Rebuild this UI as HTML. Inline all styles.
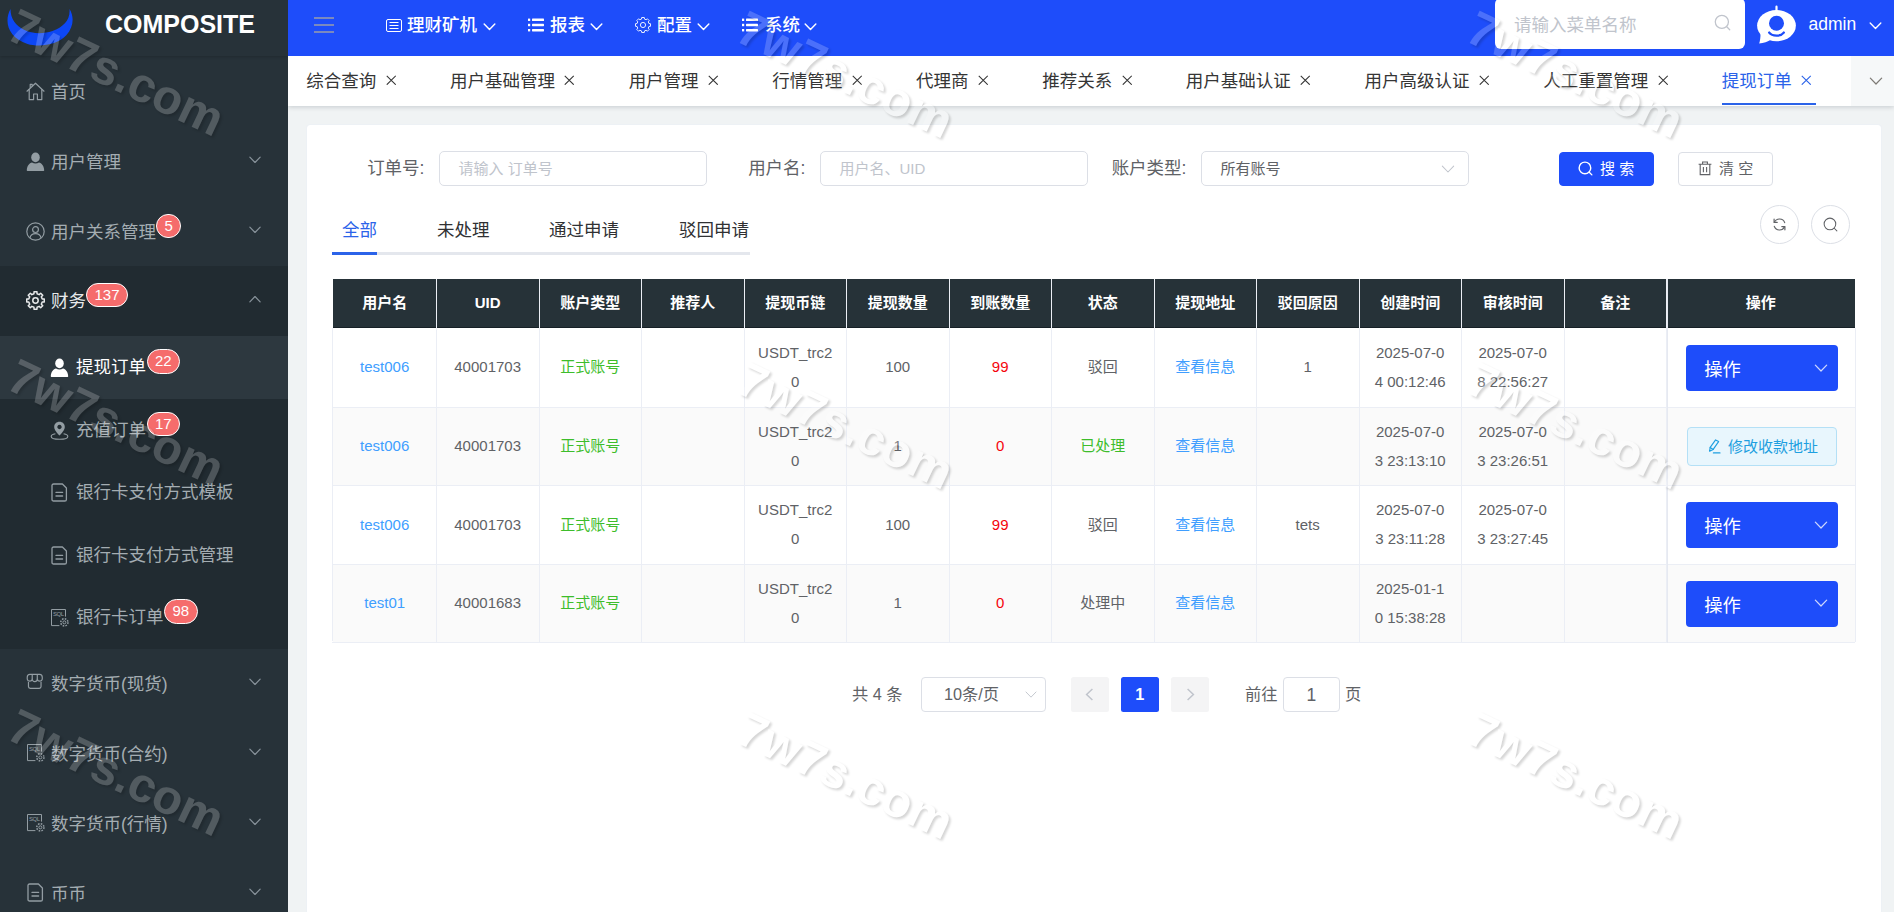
<!DOCTYPE html>
<html lang="zh-CN">
<head>
<meta charset="utf-8">
<title>提现订单</title>
<style>
*{box-sizing:border-box;margin:0;padding:0}
html,body{width:1894px;height:912px;overflow:hidden;background:#f0f3f4;font-family:"Liberation Sans","Noto Sans CJK SC",sans-serif;color:#606266;font-size:17.5px}
svg{display:block}
.abs{position:absolute}
/* ---------- sidebar ---------- */
#side{position:absolute;left:0;top:0;width:288px;height:912px;background:#273239;overflow:hidden;z-index:5}
#logo{position:absolute;left:0;top:0;width:288px;height:56px;background:#273239;box-shadow:0 1px 3px rgba(0,0,0,.18)}
#logo .name{position:absolute;left:105px;top:9px;font-size:25px;font-weight:700;color:#fff;line-height:30px}
.mi{position:absolute;left:0;width:288px;height:70px;color:#a4adb2;font-size:17.5px;line-height:70px}
.mi .ic{position:absolute;left:26px;top:24.6px;width:19px;height:19px}
.mi .tx{position:absolute;left:51px;top:0;white-space:nowrap}
.mi .ar{position:absolute;left:249px;top:29px;width:12px;height:8px}
.sub{position:absolute;left:0;width:288px;height:62.5px;color:#a4adb2;font-size:17.5px;line-height:62.5px}
.sub .ic{position:absolute;left:50px;top:22px;width:19px;height:19px}
.sub .tx{position:absolute;left:76px;top:0;white-space:nowrap}
.bdg{position:absolute;height:24.5px;min-width:24.5px;padding:0 7.5px;border-radius:12.5px;background:#f56c6c;border:1.25px solid #fff;color:#fff;font-size:15px;line-height:22px;text-align:center;z-index:2}
/* ---------- header ---------- */
#head{position:absolute;left:288px;top:0;width:1606px;height:56.4px;background:#1e4dfa;z-index:3}
.nav{position:absolute;top:0;height:56px;color:#fff;font-size:17.5px;font-weight:500;line-height:50px;white-space:nowrap}
/* ---------- tabs bar ---------- */
#tabs{position:absolute;left:288px;top:56px;width:1606px;height:50px;background:#fff;box-shadow:0 1px 5px rgba(0,21,41,.18);z-index:2}
.tb{position:absolute;top:0;height:50px;line-height:51px;font-size:17.5px;color:#353535;white-space:nowrap}
/* ---------- card ---------- */
#card{position:absolute;left:307px;top:125px;width:1574px;height:800px;background:#fff;box-shadow:0 0 0 1px rgba(235,238,245,.55);border-radius:3.5px;z-index:1}
.lab{text-align:right;line-height:35px;font-size:17.5px;color:#606266;white-space:nowrap}
.inp{width:268px;height:35px;border:1.25px solid #dcdfe6;border-radius:5px;background:#fff}
.inp span{position:absolute;left:18.5px;top:0;line-height:33px;font-size:15px;color:#c0c4cc;white-space:nowrap}
.btn{width:95px;height:34.5px;border:1.25px solid;border-radius:4px;font-size:15px;line-height:32px;white-space:nowrap}
.st{font-size:17.5px;line-height:50px;white-space:nowrap}
.rb{width:39px;height:39px;border-radius:50%;border:1.25px solid #dcdfe6;background:#fff}
.th{height:48.5px;line-height:48px;text-align:center;color:#fff;font-weight:700;font-size:15px;white-space:nowrap}
.td{display:flex;align-items:center;justify-content:center;text-align:center;font-size:15px;line-height:28.75px;color:#606266}
.opb{width:152px;height:46px;background:#1e4dfa;border-radius:4px;color:#fff;font-size:18.3px;line-height:50px;white-space:nowrap}
.edb{width:150px;height:39px;background:#e8f6fd;border:1.25px solid #b4e0f6;border-radius:4px;color:#1e9fe0;font-size:15px;line-height:37px;white-space:nowrap}
.pg{font-size:16.25px;line-height:35px;color:#606266;white-space:nowrap}
.pb{width:37.5px;height:35px;border-radius:2.5px;text-align:center;line-height:35px;font-size:16.25px}
#wm{position:absolute;left:0;top:0;width:1894px;height:912px;overflow:hidden;z-index:20;pointer-events:none}
#wmi{position:absolute;left:0;top:0;width:1894px;height:912px;overflow:hidden;filter:url(#wmf)}
.wm{position:absolute;font-size:48.5px;font-weight:700;line-height:48.5px;color:#fff;white-space:nowrap;transform-origin:0 0;transform:rotate(25.3deg)}

</style>
</head>
<body>
<div id="side">
<div class="abs" style="left:0;top:266px;width:288px;height:382.5px;background:#212b31"></div>
<div class="abs" style="left:0;top:336px;width:288px;height:62.5px;background:#2d383f"></div>
<div class="mi" style="top:57px;color:#a4adb2"><span class="ic"><svg width="19" height="19" viewBox="0 0 19 19"><g fill="none" stroke="#939da3" stroke-width="1.2" stroke-linejoin="round" stroke-linecap="round"><path d="M1 9.2 L9.5 1.2 L18 9.2"/><path d="M3.2 7.6 V17.6 H7.6 V12 H11.4 V17.6 H15.8 V7.6"/><path d="M4.2 5.6 V2.4 H6.2 V3.8"/></g></svg></span><span class="tx">首页</span></div>
<div class="mi" style="top:127px;color:#a4adb2"><span class="ic"><svg width="19" height="19" viewBox="0 0 19 19"><g fill="#939da3"><ellipse cx="9.5" cy="5.4" rx="4.3" ry="4.8"/><path d="M0.8 18.6 C0.8 13.6 3.6 11 6 10.4 C8 11.8 11 11.8 13 10.4 C15.4 11 18.2 13.6 18.2 18.6 C18.2 19 17.9 19 17.6 19 H1.4 C1.1 19 0.8 19 0.8 18.6Z"/></g></svg></span><span class="tx">用户管理</span><span class="ar"><svg width="12" height="8" viewBox="0 0 14 9"><path d="M1 1.2 L7 7.4 L13 1.2" fill="none" stroke="#87929a" stroke-width="1.4" stroke-linecap="round" stroke-linejoin="round"/></svg></span></div>
<div class="mi" style="top:197px;color:#a4adb2"><span class="ic"><svg width="19" height="19" viewBox="0 0 19 19"><g fill="none" stroke="#939da3" stroke-width="1.2"><circle cx="9.5" cy="9.5" r="8.7"/><circle cx="9.5" cy="7.6" r="2.9"/><path d="M4 15.8 C4.6 12.6 7 11.6 9.5 11.6 C12 11.6 14.4 12.6 15 15.8"/></g></svg></span><span class="tx">用户关系管理</span><span class="ar"><svg width="12" height="8" viewBox="0 0 14 9"><path d="M1 1.2 L7 7.4 L13 1.2" fill="none" stroke="#87929a" stroke-width="1.4" stroke-linecap="round" stroke-linejoin="round"/></svg></span></div>
<div class="bdg" style="left:156.0px;top:213.65px">5</div>
<div class="mi" style="top:266px;color:#e8eaeb"><span class="ic"><svg width="19" height="19" viewBox="0 0 19 19"><g fill="none" stroke="#e8eaeb" stroke-width="1.5" stroke-linejoin="round"><path d="M8.08 0.71 L10.92 0.71 L11.07 2.78 L13.14 3.64 L14.71 2.28 L16.72 4.29 L15.36 5.86 L16.22 7.93 L18.29 8.08 L18.29 10.92 L16.22 11.07 L15.36 13.14 L16.72 14.71 L14.71 16.72 L13.14 15.36 L11.07 16.22 L10.92 18.29 L8.08 18.29 L7.93 16.22 L5.86 15.36 L4.29 16.72 L2.28 14.71 L3.64 13.14 L2.78 11.07 L0.71 10.92 L0.71 8.08 L2.78 7.93 L3.64 5.86 L2.28 4.29 L4.29 2.28 L5.86 3.64 L7.93 2.78Z"/><circle cx="9.5" cy="9.5" r="2.7"/></g></svg></span><span class="tx">财务</span><span class="ar"><svg width="12" height="8" viewBox="0 0 14 9"><path d="M1 7.8 L7 1.6 L13 7.8" fill="none" stroke="#87929a" stroke-width="1.4" stroke-linecap="round" stroke-linejoin="round"/></svg></span></div>
<div class="bdg" style="left:86.0px;top:282.65px">137</div>
<div class="sub" style="top:336px;color:#ffffff"><span class="ic"><svg width="19" height="19" viewBox="0 0 19 19"><g fill="#ffffff"><ellipse cx="9.5" cy="5.4" rx="4.3" ry="4.8"/><path d="M0.8 18.6 C0.8 13.6 3.6 11 6 10.4 C8 11.8 11 11.8 13 10.4 C15.4 11 18.2 13.6 18.2 18.6 C18.2 19 17.9 19 17.6 19 H1.4 C1.1 19 0.8 19 0.8 18.6Z"/></g></svg></span><span class="tx">提现订单</span></div>
<div class="bdg" style="left:146.5px;top:349.2px">22</div>
<div class="sub" style="top:398.5px;color:#a4adb2"><span class="ic"><svg width="19" height="19" viewBox="0 0 19 19"><path d="M9.5 0.8 C6.4 0.8 4.2 3 4.2 5.9 C4.2 9 7.4 12.2 9.5 14.6 C11.6 12.2 14.8 9 14.8 5.9 C14.8 3 12.6 0.8 9.5 0.8Z M9.5 3.8 A2.2 2.2 0 1 1 9.49 3.8Z" fill="#939da3" fill-rule="evenodd"/><path d="M5.4 12.8 C2.8 13.3 1.2 14.3 1.2 15.4 C1.2 17 4.9 18.2 9.5 18.2 C14.1 18.2 17.8 17 17.8 15.4 C17.8 14.3 16.2 13.3 13.6 12.8" fill="none" stroke="#939da3" stroke-width="1.1"/></svg></span><span class="tx">充值订单</span></div>
<div class="bdg" style="left:146.5px;top:411.7px">17</div>
<div class="sub" style="top:461px;color:#a4adb2"><span class="ic"><svg width="19" height="19" viewBox="0 0 19 19"><g fill="none" stroke="#939da3" stroke-width="1.3" stroke-linejoin="round" stroke-linecap="round"><path d="M3.6 1 H12.4 L16.4 5 V16.4 C16.4 17.4 15.8 18 14.8 18 H3.6 C2.6 18 2 17.4 2 16.4 V2.6 C2 1.6 2.6 1 3.6 1Z"/><path d="M6 9.4 H12.6 M6 13 H12.6"/></g></svg></span><span class="tx">银行卡支付方式模板</span></div>
<div class="sub" style="top:523.5px;color:#a4adb2"><span class="ic"><svg width="19" height="19" viewBox="0 0 19 19"><g fill="none" stroke="#939da3" stroke-width="1.3" stroke-linejoin="round" stroke-linecap="round"><path d="M3.6 1 H12.4 L16.4 5 V16.4 C16.4 17.4 15.8 18 14.8 18 H3.6 C2.6 18 2 17.4 2 16.4 V2.6 C2 1.6 2.6 1 3.6 1Z"/><path d="M6 9.4 H12.6 M6 13 H12.6"/></g></svg></span><span class="tx">银行卡支付方式管理</span></div>
<div class="sub" style="top:586px;color:#a4adb2"><span class="ic"><svg width="19" height="19" viewBox="0 0 19 19"><g fill="none" stroke="#939da3" stroke-width="1" stroke-linejoin="round"><path d="M9.4 17.6 H1.5 V1.5 H15.5 V8.6"/></g><text x="3" y="8.2" font-family="Liberation Sans,sans-serif" font-size="6" fill="#939da3" textLength="11">SQL</text><g transform="translate(9.6 9.6) scale(0.5)"><g fill="none" stroke="#939da3" stroke-width="2"><circle cx="9.5" cy="9.5" r="3"/><circle cx="9.5" cy="9.5" r="7.2" stroke-dasharray="3.2 2.45" stroke-width="3"/></g></g></svg></span><span class="tx">银行卡订单</span></div>
<div class="bdg" style="left:164.0px;top:599.2px">98</div>
<div class="mi" style="top:648.5px"><span class="ic"><svg width="17.5" height="16.6" viewBox="0 0 20 19"><g fill="none" stroke="#939da3" stroke-width="1.35" stroke-linejoin="round"><path d="M4.4 1.6 H15.6 C17.4 1.6 18.6 3 18.6 5 V7 A2.9 2.9 0 0 1 12.9 7 A2.9 2.9 0 0 1 7.1 7 A2.9 2.9 0 0 1 1.4 7 V5 C1.4 3 2.6 1.6 4.4 1.6Z"/><path d="M7.1 1.6 V7 M12.9 1.6 V7"/><path d="M2.8 10.4 V15.6 C2.8 16.8 3.6 17.6 4.8 17.6 H15.2 C16.4 17.6 17.2 16.8 17.2 15.6 V10.4"/></g></svg></span><span class="tx">数字货币(现货)</span><span class="ar"><svg width="12" height="8" viewBox="0 0 14 9"><path d="M1 1.2 L7 7.4 L13 1.2" fill="none" stroke="#87929a" stroke-width="1.4" stroke-linecap="round" stroke-linejoin="round"/></svg></span></div>
<div class="mi" style="top:718.5px"><span class="ic"><svg width="19" height="19" viewBox="0 0 19 19"><g fill="none" stroke="#939da3" stroke-width="1" stroke-linejoin="round"><path d="M9.4 17.6 H1.5 V1.5 H15.5 V8.6"/></g><text x="3" y="8.2" font-family="Liberation Sans,sans-serif" font-size="6" fill="#939da3" textLength="11">SQL</text><g transform="translate(9.6 9.6) scale(0.5)"><g fill="none" stroke="#939da3" stroke-width="2"><circle cx="9.5" cy="9.5" r="3"/><circle cx="9.5" cy="9.5" r="7.2" stroke-dasharray="3.2 2.45" stroke-width="3"/></g></g></svg></span><span class="tx">数字货币(合约)</span><span class="ar"><svg width="12" height="8" viewBox="0 0 14 9"><path d="M1 1.2 L7 7.4 L13 1.2" fill="none" stroke="#87929a" stroke-width="1.4" stroke-linecap="round" stroke-linejoin="round"/></svg></span></div>
<div class="mi" style="top:788.5px"><span class="ic"><svg width="19" height="19" viewBox="0 0 19 19"><g fill="none" stroke="#939da3" stroke-width="1" stroke-linejoin="round"><path d="M9.4 17.6 H1.5 V1.5 H15.5 V8.6"/></g><text x="3" y="8.2" font-family="Liberation Sans,sans-serif" font-size="6" fill="#939da3" textLength="11">SQL</text><g transform="translate(9.6 9.6) scale(0.5)"><g fill="none" stroke="#939da3" stroke-width="2"><circle cx="9.5" cy="9.5" r="3"/><circle cx="9.5" cy="9.5" r="7.2" stroke-dasharray="3.2 2.45" stroke-width="3"/></g></g></svg></span><span class="tx">数字货币(行情)</span><span class="ar"><svg width="12" height="8" viewBox="0 0 14 9"><path d="M1 1.2 L7 7.4 L13 1.2" fill="none" stroke="#87929a" stroke-width="1.4" stroke-linecap="round" stroke-linejoin="round"/></svg></span></div>
<div class="mi" style="top:858.5px"><span class="ic"><svg width="19" height="19" viewBox="0 0 19 19"><g fill="none" stroke="#939da3" stroke-width="1.3" stroke-linejoin="round" stroke-linecap="round"><path d="M3.6 1 H12.4 L16.4 5 V16.4 C16.4 17.4 15.8 18 14.8 18 H3.6 C2.6 18 2 17.4 2 16.4 V2.6 C2 1.6 2.6 1 3.6 1Z"/><path d="M6 9.4 H12.6 M6 13 H12.6"/></g></svg></span><span class="tx">币币</span><span class="ar"><svg width="12" height="8" viewBox="0 0 14 9"><path d="M1 1.2 L7 7.4 L13 1.2" fill="none" stroke="#87929a" stroke-width="1.4" stroke-linecap="round" stroke-linejoin="round"/></svg></span></div>
<div id="logo">
<svg class="abs" style="left:4.5px;top:8px" width="70" height="38" viewBox="0 0 69 38"><path d="M5 1 C-2 14 3 30 22 36 C34 39.5 52 37 61 27 C68 19 69 9 64 1 C65 12 58 19 47 23 C38 26 27 26 19 22 C10 17.5 5 11 5 1 Z" fill="#0d47f5"/></svg>
<div class="name">COMPOSITE</div></div>
</div>
<div id="head">
<svg class="abs" style="left:26px;top:17px" width="20" height="16" viewBox="0 0 20 16"><path d="M0 1 H20 M0 8 H20 M0 15 H20" stroke="#9a9daa" stroke-width="1.4" fill="none"/></svg>
<div class="nav" style="left:0"><span class="abs" style="left:98px;top:18px"><svg width="16" height="14" viewBox="0 0 16 14"><g fill="none" stroke="#fff" stroke-width="1"><rect x="0.5" y="1.5" width="15" height="12" rx="1.5"/><path d="M3.5 4.5 H12.5 M3.5 7.5 H12.5 M3.5 10.5 H12.5"/></g></svg></span><span class="abs" style="left:119px;top:0">理财矿机</span><span class="abs" style="left:194.5px;top:22.5px"><svg width="13" height="8" viewBox="0 0 14 9"><path d="M1 1.2 L7 7.4 L13 1.2" fill="none" stroke="#fff" stroke-width="1.6" stroke-linecap="round" stroke-linejoin="round"/></svg></span></div>
<div class="nav" style="left:0"><span class="abs" style="left:239.5px;top:18px"><svg width="16" height="14" viewBox="0 0 16 14"><g fill="#fff"><rect x="0" y="0.6" width="2.2" height="2.4"/><rect x="4" y="0.6" width="12" height="2.4" rx=".6"/><rect x="0" y="5.8" width="2.2" height="2.4"/><rect x="4" y="5.8" width="12" height="2.4" rx=".6"/><rect x="0" y="11" width="2.2" height="2.4"/><rect x="4" y="11" width="12" height="2.4" rx=".6"/></g></svg></span><span class="abs" style="left:262px;top:0">报表</span><span class="abs" style="left:301.5px;top:22.5px"><svg width="13" height="8" viewBox="0 0 14 9"><path d="M1 1.2 L7 7.4 L13 1.2" fill="none" stroke="#fff" stroke-width="1.6" stroke-linecap="round" stroke-linejoin="round"/></svg></span></div>
<div class="nav" style="left:0"><span class="abs" style="left:347px;top:17px"><svg width="16" height="16" viewBox="0 0 16 16"><g fill="none" stroke="#fff" stroke-width="0.9" stroke-linejoin="round"><path d="M6.71 0.51 L9.29 0.51 L9.51 2.09 L11.11 2.75 L12.39 1.79 L14.21 3.61 L13.25 4.89 L13.91 6.49 L15.49 6.71 L15.49 9.29 L13.91 9.51 L13.25 11.11 L14.21 12.39 L12.39 14.21 L11.11 13.25 L9.51 13.91 L9.29 15.49 L6.71 15.49 L6.49 13.91 L4.89 13.25 L3.61 14.21 L1.79 12.39 L2.75 11.11 L2.09 9.51 L0.51 9.29 L0.51 6.71 L2.09 6.49 L2.75 4.89 L1.79 3.61 L3.61 1.79 L4.89 2.75 L6.49 2.09Z"/><circle cx="8" cy="8" r="2.6"/></g></svg></span><span class="abs" style="left:369px;top:0">配置</span><span class="abs" style="left:408.5px;top:22.5px"><svg width="13" height="8" viewBox="0 0 14 9"><path d="M1 1.2 L7 7.4 L13 1.2" fill="none" stroke="#fff" stroke-width="1.6" stroke-linecap="round" stroke-linejoin="round"/></svg></span></div>
<div class="nav" style="left:0"><span class="abs" style="left:454px;top:18px"><svg width="16" height="14" viewBox="0 0 16 14"><g fill="#fff"><rect x="0" y="0.6" width="2.2" height="2.4"/><rect x="4" y="0.6" width="12" height="2.4" rx=".6"/><rect x="0" y="5.8" width="2.2" height="2.4"/><rect x="4" y="5.8" width="12" height="2.4" rx=".6"/><rect x="0" y="11" width="2.2" height="2.4"/><rect x="4" y="11" width="12" height="2.4" rx=".6"/></g></svg></span><span class="abs" style="left:477px;top:0">系统</span><span class="abs" style="left:516px;top:22.5px"><svg width="13" height="8" viewBox="0 0 14 9"><path d="M1 1.2 L7 7.4 L13 1.2" fill="none" stroke="#fff" stroke-width="1.6" stroke-linecap="round" stroke-linejoin="round"/></svg></span></div>
<div class="abs" style="left:1207px;top:-2px;width:250px;height:50.5px;background:#fff;border-radius:6px"><span class="abs" style="left:19px;top:3px;line-height:49px;font-size:17.5px;color:#c0c4cc;white-space:nowrap">请输入菜单名称</span><span class="abs" style="left:219px;top:16px"><svg width="17" height="17" viewBox="0 0 16 16"><g fill="none" stroke="#c0c4cc" stroke-width="1.2" stroke-linecap="round"><circle cx="7.4" cy="7.4" r="6.2"/><path d="M12 12 L14.8 14.8"/></g></svg></span></div>
<svg class="abs" style="left:1468px;top:5px" width="41" height="40" viewBox="0 0 41 40">
<g fill="#fff"><rect x="19.4" y="0.6" width="2.2" height="7" rx="1.1"/>
<ellipse cx="20.5" cy="20.6" rx="19.4" ry="15.6"/>
<path d="M4.5 28 C4.6 32.5 4 36 3.2 38.6 C7.5 38 12 36.4 15 34.4 Z"/></g>
<circle cx="20.5" cy="18.2" r="7.5" fill="#1e4dfa"/>
<path d="M13.2 27.6 C16.2 31.6 24.8 31.6 27.8 27.6" fill="none" stroke="#1e4dfa" stroke-width="2.4" stroke-linecap="round"/>
</svg>
<div class="abs" style="left:1520.5px;top:0;line-height:49px;font-size:17.5px;color:#fff;white-space:nowrap">admin</div>
<span class="abs" style="left:1581px;top:22px"><svg width="13" height="8" viewBox="0 0 14 9"><path d="M1 1.2 L7 7.4 L13 1.2" fill="none" stroke="#fff" stroke-width="1.5" stroke-linecap="round" stroke-linejoin="round"/></svg></span>
</div>
<div id="tabs">
<div class="tb" style="left:18.3px;color:#353535">综合查询<span class="abs" style="left:79.5px;top:18.6px"><svg width="10.5" height="10.5" viewBox="0 0 11 11"><path d="M0.8 0.8 L10.2 10.2 M10.2 0.8 L0.8 10.2" stroke="#353535" stroke-width="1.1" fill="none"/></svg></span></div>
<div class="tb" style="left:161.97000000000003px;color:#353535">用户基础管理<span class="abs" style="left:114.5px;top:18.6px"><svg width="10.5" height="10.5" viewBox="0 0 11 11"><path d="M0.8 0.8 L10.2 10.2 M10.2 0.8 L0.8 10.2" stroke="#353535" stroke-width="1.1" fill="none"/></svg></span></div>
<div class="tb" style="left:340.64000000000004px;color:#353535">用户管理<span class="abs" style="left:79.5px;top:18.6px"><svg width="10.5" height="10.5" viewBox="0 0 11 11"><path d="M0.8 0.8 L10.2 10.2 M10.2 0.8 L0.8 10.2" stroke="#353535" stroke-width="1.1" fill="none"/></svg></span></div>
<div class="tb" style="left:484.31000000000006px;color:#353535">行情管理<span class="abs" style="left:79.5px;top:18.6px"><svg width="10.5" height="10.5" viewBox="0 0 11 11"><path d="M0.8 0.8 L10.2 10.2 M10.2 0.8 L0.8 10.2" stroke="#353535" stroke-width="1.1" fill="none"/></svg></span></div>
<div class="tb" style="left:627.98px;color:#353535">代理商<span class="abs" style="left:62.0px;top:18.6px"><svg width="10.5" height="10.5" viewBox="0 0 11 11"><path d="M0.8 0.8 L10.2 10.2 M10.2 0.8 L0.8 10.2" stroke="#353535" stroke-width="1.1" fill="none"/></svg></span></div>
<div class="tb" style="left:754.15px;color:#353535">推荐关系<span class="abs" style="left:79.5px;top:18.6px"><svg width="10.5" height="10.5" viewBox="0 0 11 11"><path d="M0.8 0.8 L10.2 10.2 M10.2 0.8 L0.8 10.2" stroke="#353535" stroke-width="1.1" fill="none"/></svg></span></div>
<div class="tb" style="left:897.8199999999999px;color:#353535">用户基础认证<span class="abs" style="left:114.5px;top:18.6px"><svg width="10.5" height="10.5" viewBox="0 0 11 11"><path d="M0.8 0.8 L10.2 10.2 M10.2 0.8 L0.8 10.2" stroke="#353535" stroke-width="1.1" fill="none"/></svg></span></div>
<div class="tb" style="left:1076.49px;color:#353535">用户高级认证<span class="abs" style="left:114.5px;top:18.6px"><svg width="10.5" height="10.5" viewBox="0 0 11 11"><path d="M0.8 0.8 L10.2 10.2 M10.2 0.8 L0.8 10.2" stroke="#353535" stroke-width="1.1" fill="none"/></svg></span></div>
<div class="tb" style="left:1255.16px;color:#353535">人工重置管理<span class="abs" style="left:114.5px;top:18.6px"><svg width="10.5" height="10.5" viewBox="0 0 11 11"><path d="M0.8 0.8 L10.2 10.2 M10.2 0.8 L0.8 10.2" stroke="#353535" stroke-width="1.1" fill="none"/></svg></span></div>
<div class="tb" style="left:1433.8300000000002px;color:#2b63e9">提现订单<span class="abs" style="left:79.5px;top:18.6px"><svg width="10.5" height="10.5" viewBox="0 0 11 11"><path d="M0.8 0.8 L10.2 10.2 M10.2 0.8 L0.8 10.2" stroke="#2b63e9" stroke-width="1.1" fill="none"/></svg></span></div>
<div class="abs" style="left:1433.8300000000002px;top:46.6px;width:94.0px;height:2.9px;background:#2b63e9"></div>
<div class="abs" style="left:1563px;top:0;width:43px;height:50px;background:#f6f8f9"><span class="abs" style="left:17.5px;top:21px"><svg width="14" height="8.5" viewBox="0 0 14 9"><path d="M1 1.2 L7 7.4 L13 1.2" fill="none" stroke="#7d7a75" stroke-width="1.3" stroke-linecap="round" stroke-linejoin="round"/></svg></span></div>
</div>
<div id="card">
<div class="abs lab" style="left:-32.5px;top:26px;width:150px">订单号:</div>
<div class="abs inp" style="left:132px;top:26px"><span>请输入 订单号</span></div>
<div class="abs lab" style="left:348.5px;top:26px;width:150px">用户名:</div>
<div class="abs inp" style="left:513px;top:26px"><span>用户名、UID</span></div>
<div class="abs lab" style="left:729.5px;top:26px;width:150px">账户类型:</div>
<div class="abs inp" style="left:894px;top:26px"><span style="color:#606266">所有账号</span><i class="abs" style="left:239px;top:13px"><svg width="14" height="8.5" viewBox="0 0 14 9"><path d="M1 1.2 L7 7.4 L13 1.2" fill="none" stroke="#c0c4cc" stroke-width="1.1" stroke-linecap="round" stroke-linejoin="round"/></svg></i></div>
<div class="abs btn" style="left:1252px;top:26.5px;background:#1e4dfa;border-color:#1e4dfa;color:#fff"><i class="abs" style="left:18.3px;top:8.6px"><svg width="15" height="15" viewBox="0 0 16 16"><g fill="none" stroke="#fff" stroke-width="1.5" stroke-linecap="round"><circle cx="7.4" cy="7.4" r="6.2"/><path d="M12 12 L14.8 14.8"/></g></svg></i><span class="abs" style="left:40px;top:0">搜 索</span></div>
<div class="abs btn" style="left:1371px;top:26.5px;background:#fff;border-color:#dcdfe6;color:#606266"><i class="abs" style="left:19.2px;top:8.6px"><svg width="14" height="15" viewBox="0 0 14 15"><g fill="none" stroke="#606266" stroke-width="1.1"><path d="M0.6 3.2 H13.4 M4.6 3 V1 H9.4 V3 M2.2 3.4 V13.6 H11.8 V3.4 M5.4 6 V11.2 M8.6 6 V11.2"/></g></svg></i><span class="abs" style="left:40px;top:0">清 空</span></div>
<div class="abs" style="left:25px;top:127px;width:417.5px;height:3px;background:#e4e7ed"></div>
<div class="abs" style="left:25px;top:127px;width:45px;height:3px;background:#2b63e9"></div>
<div class="abs st" style="left:35px;top:80.19999999999999px;color:#2b63e9">全部</div>
<div class="abs st" style="left:130px;top:80.19999999999999px;color:#303133">未处理</div>
<div class="abs st" style="left:242px;top:80.19999999999999px;color:#303133">通过申请</div>
<div class="abs st" style="left:372px;top:80.19999999999999px;color:#303133">驳回申请</div>
<div class="abs rb" style="left:1453px;top:79.5px"><i class="abs" style="left:11px;top:11px"><svg width="15" height="15" viewBox="0 0 15 15"><g transform="translate(15 0) scale(-1 1)" fill="none" stroke="#606266" stroke-width="1.2" stroke-linecap="round" stroke-linejoin="round"><path d="M12.6 5.2 A5.6 5.6 0 0 0 2.3 5.6"/><path d="M2.4 9.8 A5.6 5.6 0 0 0 12.7 9.4"/><path d="M12.9 2.2 V5.4 H9.8"/><path d="M2.1 12.8 V9.6 H5.2"/></g></svg></i></div>
<div class="abs rb" style="left:1504px;top:79.5px"><i class="abs" style="left:11px;top:11px"><svg width="15" height="15" viewBox="0 0 16 16"><g fill="none" stroke="#606266" stroke-width="1.1" stroke-linecap="round"><circle cx="7.4" cy="7.4" r="6.2"/><path d="M12 12 L14.8 14.8"/></g></svg></i></div>
<div class="abs" id="tbl" style="left:25px;top:154px;width:1523px;height:364px">
<div class="abs" style="left:1px;top:0;width:1522px;height:49px;background:#263238;border-bottom:1px solid #162026"></div>
<div class="abs th" style="left:1px;top:0;width:103.39999999999998px">用户名</div>
<div class="abs th" style="left:104.39999999999998px;top:0;width:102.5px">UID</div>
<div class="abs th" style="left:206.89999999999998px;top:0;width:102.5px">账户类型</div>
<div class="abs th" style="left:309.4px;top:0;width:102.5px">推荐人</div>
<div class="abs th" style="left:411.9px;top:0;width:102.5px">提现币链</div>
<div class="abs th" style="left:514.4px;top:0;width:102.5px">提现数量</div>
<div class="abs th" style="left:616.9px;top:0;width:102.50000000000011px">到账数量</div>
<div class="abs th" style="left:719.4000000000001px;top:0;width:102.5px">状态</div>
<div class="abs th" style="left:821.9000000000001px;top:0;width:102.5px">提现地址</div>
<div class="abs th" style="left:924.4000000000001px;top:0;width:102.5px">驳回原因</div>
<div class="abs th" style="left:1026.9px;top:0;width:102.5px">创建时间</div>
<div class="abs th" style="left:1129.4px;top:0;width:102.5px">审核时间</div>
<div class="abs th" style="left:1231.9px;top:0;width:102.5px">备注</div>
<div class="abs th" style="left:1334.4px;top:0;width:188.5999999999999px">操作</div>
<div class="abs" style="left:1px;top:49px;width:1522px;height:79px;background:#fff"></div>
<div class="abs" style="left:0;top:128px;width:1523px;height:1px;background:#ebeef5"></div>
<div class="abs td" style="left:1px;top:49px;width:103.39999999999998px;height:79px;color:#409eff"><span>test006</span></div>
<div class="abs td" style="left:104.39999999999998px;top:49px;width:102.5px;height:79px"><span>40001703</span></div>
<div class="abs td" style="left:206.89999999999998px;top:49px;width:102.5px;height:79px;color:#3dbd2b"><span>正式账号</span></div>
<div class="abs td" style="left:411.9px;top:49px;width:102.5px;height:79px"><span>USDT_trc2<br>0</span></div>
<div class="abs td" style="left:514.4px;top:49px;width:102.5px;height:79px"><span>100</span></div>
<div class="abs td" style="left:616.9px;top:49px;width:102.50000000000011px;height:79px;color:#f5040c"><span>99</span></div>
<div class="abs td" style="left:719.4000000000001px;top:49px;width:102.5px;height:79px"><span>驳回</span></div>
<div class="abs td" style="left:821.9000000000001px;top:49px;width:102.5px;height:79px;color:#409eff"><span>查看信息</span></div>
<div class="abs td" style="left:924.4000000000001px;top:49px;width:102.5px;height:79px"><span>1</span></div>
<div class="abs td" style="left:1026.9px;top:49px;width:102.5px;height:79px"><span>2025-07-0<br>4 00:12:46</span></div>
<div class="abs td" style="left:1129.4px;top:49px;width:102.5px;height:79px"><span>2025-07-0<br>8 22:56:27</span></div>
<div class="abs opb" style="left:1354px;top:66px"><span class="abs" style="left:18.3px;top:0">操作</span><i class="abs" style="left:128px;top:18.5px"><svg width="14" height="8.5" viewBox="0 0 14 9"><path d="M1 1.2 L7 7.4 L13 1.2" fill="none" stroke="#cfd8fd" stroke-width="1.3" stroke-linecap="round" stroke-linejoin="round"/></svg></i></div>
<div class="abs" style="left:1px;top:129px;width:1522px;height:77px;background:#fafafa"></div>
<div class="abs" style="left:0;top:206px;width:1523px;height:1px;background:#ebeef5"></div>
<div class="abs td" style="left:1px;top:129px;width:103.39999999999998px;height:77px;color:#409eff"><span>test006</span></div>
<div class="abs td" style="left:104.39999999999998px;top:129px;width:102.5px;height:77px"><span>40001703</span></div>
<div class="abs td" style="left:206.89999999999998px;top:129px;width:102.5px;height:77px;color:#3dbd2b"><span>正式账号</span></div>
<div class="abs td" style="left:411.9px;top:129px;width:102.5px;height:77px"><span>USDT_trc2<br>0</span></div>
<div class="abs td" style="left:514.4px;top:129px;width:102.5px;height:77px"><span>1</span></div>
<div class="abs td" style="left:616.9px;top:129px;width:102.50000000000011px;height:77px;color:#f5040c"><span>0</span></div>
<div class="abs td" style="left:719.4000000000001px;top:129px;width:102.5px;height:77px;color:#3dbd2b"><span>已处理</span></div>
<div class="abs td" style="left:821.9000000000001px;top:129px;width:102.5px;height:77px;color:#409eff"><span>查看信息</span></div>
<div class="abs td" style="left:1026.9px;top:129px;width:102.5px;height:77px"><span>2025-07-0<br>3 23:13:10</span></div>
<div class="abs td" style="left:1129.4px;top:129px;width:102.5px;height:77px"><span>2025-07-0<br>3 23:26:51</span></div>
<div class="abs edb" style="left:1355px;top:148.0px"><i class="abs" style="left:19px;top:10.5px"><svg width="14" height="15" viewBox="0 0 14 15"><g fill="none" stroke="#1e9fe0" stroke-width="1.15" stroke-linejoin="round" stroke-linecap="round"><path d="M8.6 0.9 L11.6 2.6 L6.2 10.4 L2.6 12.2 L3.2 8.4 Z"/><path d="M3.2 8.4 L6.2 10.4"/><path d="M6.4 13.9 H13"/></g></svg></i><span class="abs" style="left:40px;top:0">修改收款地址</span></div>
<div class="abs" style="left:1px;top:207px;width:1522px;height:78px;background:#fff"></div>
<div class="abs" style="left:0;top:285px;width:1523px;height:1px;background:#ebeef5"></div>
<div class="abs td" style="left:1px;top:207px;width:103.39999999999998px;height:78px;color:#409eff"><span>test006</span></div>
<div class="abs td" style="left:104.39999999999998px;top:207px;width:102.5px;height:78px"><span>40001703</span></div>
<div class="abs td" style="left:206.89999999999998px;top:207px;width:102.5px;height:78px;color:#3dbd2b"><span>正式账号</span></div>
<div class="abs td" style="left:411.9px;top:207px;width:102.5px;height:78px"><span>USDT_trc2<br>0</span></div>
<div class="abs td" style="left:514.4px;top:207px;width:102.5px;height:78px"><span>100</span></div>
<div class="abs td" style="left:616.9px;top:207px;width:102.50000000000011px;height:78px;color:#f5040c"><span>99</span></div>
<div class="abs td" style="left:719.4000000000001px;top:207px;width:102.5px;height:78px"><span>驳回</span></div>
<div class="abs td" style="left:821.9000000000001px;top:207px;width:102.5px;height:78px;color:#409eff"><span>查看信息</span></div>
<div class="abs td" style="left:924.4000000000001px;top:207px;width:102.5px;height:78px"><span>tets</span></div>
<div class="abs td" style="left:1026.9px;top:207px;width:102.5px;height:78px"><span>2025-07-0<br>3 23:11:28</span></div>
<div class="abs td" style="left:1129.4px;top:207px;width:102.5px;height:78px"><span>2025-07-0<br>3 23:27:45</span></div>
<div class="abs opb" style="left:1354px;top:223px"><span class="abs" style="left:18.3px;top:0">操作</span><i class="abs" style="left:128px;top:18.5px"><svg width="14" height="8.5" viewBox="0 0 14 9"><path d="M1 1.2 L7 7.4 L13 1.2" fill="none" stroke="#cfd8fd" stroke-width="1.3" stroke-linecap="round" stroke-linejoin="round"/></svg></i></div>
<div class="abs" style="left:1px;top:286px;width:1522px;height:77px;background:#fafafa"></div>
<div class="abs" style="left:0;top:363px;width:1523px;height:1px;background:#ebeef5"></div>
<div class="abs td" style="left:1px;top:286px;width:103.39999999999998px;height:77px;color:#409eff"><span>test01</span></div>
<div class="abs td" style="left:104.39999999999998px;top:286px;width:102.5px;height:77px"><span>40001683</span></div>
<div class="abs td" style="left:206.89999999999998px;top:286px;width:102.5px;height:77px;color:#3dbd2b"><span>正式账号</span></div>
<div class="abs td" style="left:411.9px;top:286px;width:102.5px;height:77px"><span>USDT_trc2<br>0</span></div>
<div class="abs td" style="left:514.4px;top:286px;width:102.5px;height:77px"><span>1</span></div>
<div class="abs td" style="left:616.9px;top:286px;width:102.50000000000011px;height:77px;color:#f5040c"><span>0</span></div>
<div class="abs td" style="left:719.4000000000001px;top:286px;width:102.5px;height:77px"><span>处理中</span></div>
<div class="abs td" style="left:821.9000000000001px;top:286px;width:102.5px;height:77px;color:#409eff"><span>查看信息</span></div>
<div class="abs td" style="left:1026.9px;top:286px;width:102.5px;height:77px"><span>2025-01-1<br>0 15:38:28</span></div>
<div class="abs opb" style="left:1354px;top:301.5px"><span class="abs" style="left:18.3px;top:0">操作</span><i class="abs" style="left:128px;top:18.5px"><svg width="14" height="8.5" viewBox="0 0 14 9"><path d="M1 1.2 L7 7.4 L13 1.2" fill="none" stroke="#cfd8fd" stroke-width="1.3" stroke-linecap="round" stroke-linejoin="round"/></svg></i></div>
<div class="abs" style="left:104.30px;top:0;width:1.1px;height:364px;background:#ebeef5"></div>
<div class="abs" style="left:206.80px;top:0;width:1.1px;height:364px;background:#ebeef5"></div>
<div class="abs" style="left:309.30px;top:0;width:1.1px;height:364px;background:#ebeef5"></div>
<div class="abs" style="left:411.80px;top:0;width:1.1px;height:364px;background:#ebeef5"></div>
<div class="abs" style="left:514.30px;top:0;width:1.1px;height:364px;background:#ebeef5"></div>
<div class="abs" style="left:616.80px;top:0;width:1.1px;height:364px;background:#ebeef5"></div>
<div class="abs" style="left:719.30px;top:0;width:1.1px;height:364px;background:#ebeef5"></div>
<div class="abs" style="left:821.80px;top:0;width:1.1px;height:364px;background:#ebeef5"></div>
<div class="abs" style="left:924.30px;top:0;width:1.1px;height:364px;background:#ebeef5"></div>
<div class="abs" style="left:1026.80px;top:0;width:1.1px;height:364px;background:#ebeef5"></div>
<div class="abs" style="left:1129.30px;top:0;width:1.1px;height:364px;background:#ebeef5"></div>
<div class="abs" style="left:1231.80px;top:0;width:1.1px;height:364px;background:#ebeef5"></div>
<div class="abs" style="left:1334.30px;top:0;width:1.1px;height:364px;background:#ebeef5"></div>
<div class="abs" style="left:0;top:49px;width:1px;height:313px;background:#ebeef5"></div>
<div class="abs" style="left:1522.6px;top:49px;width:1px;height:314px;background:#ebeef5"></div>
<div class="abs" style="left:1335.2px;top:0;width:1.2px;height:364px;background:#e6e9f1"></div>
</div>
<div class="abs pg" style="left:545px;top:552px">共 4 条</div>
<div class="abs" style="left:614px;top:552px;width:125px;height:35px;border:1.25px solid #dcdfe6;border-radius:4px;background:#fff"><span class="abs pg" style="left:22px;top:-1px;color:#606266">10条/页</span><i class="abs" style="left:103px;top:13px"><svg width="12" height="7.5" viewBox="0 0 14 9"><path d="M1 1.2 L7 7.4 L13 1.2" fill="none" stroke="#c0c4cc" stroke-width="1.1" stroke-linecap="round" stroke-linejoin="round"/></svg></i></div>
<div class="abs pb" style="left:764px;top:552px;background:#f4f4f5"><svg class="abs" style="left:14px;top:11px" width="9" height="13" viewBox="0 0 9 13"><path d="M7.4 1 L1.6 6.5 L7.4 12" fill="none" stroke="#c0c4cc" stroke-width="1.5"/></svg></div>
<div class="abs pb" style="left:814px;top:552px;background:#1e4dfa;color:#fff;font-weight:700">1</div>
<div class="abs pb" style="left:864px;top:552px;background:#f4f4f5"><svg class="abs" style="left:15px;top:11px" width="9" height="13" viewBox="0 0 9 13"><path d="M1.6 1 L7.4 6.5 L1.6 12" fill="none" stroke="#c0c4cc" stroke-width="1.5"/></svg></div>
<div class="abs pg" style="left:938px;top:552px">前往</div>
<div class="abs" style="left:975.8px;top:552px;width:57px;height:35px;border:1.25px solid #dcdfe6;border-radius:4px;background:#fff;text-align:center;line-height:34px;font-size:17.5px;color:#606266">1</div>
<div class="abs pg" style="left:1038px;top:552px">页</div>
</div>
<div id="wm">
<svg width="0" height="0" style="position:absolute"><defs><filter id="wmf" x="0" y="0" width="100%" height="100%" color-interpolation-filters="sRGB"><feGaussianBlur in="SourceAlpha" stdDeviation="0.8" result="b"/><feOffset in="b" dx="1.5" dy="1.5" result="o"/><feComposite in="o" in2="SourceAlpha" operator="out" result="sh"/><feColorMatrix in="sh" type="matrix" values="0 0 0 0 0  0 0 0 0 0  0 0 0 0 0  0 0 0 0.16 0" result="sh2"/><feColorMatrix in="SourceAlpha" type="matrix" values="0 0 0 0 1  0 0 0 0 1  0 0 0 0 1  0 0 0 0.2 0" result="w"/><feMerge><feMergeNode in="sh2"/><feMergeNode in="w"/></feMerge></filter></defs></svg>
<div id="wmi">
<div class="wm" style="left:22.0px;top:1px">7w7s.com</div>
<div class="wm" style="left:22.0px;top:351px">7w7s.com</div>
<div class="wm" style="left:22.0px;top:701px">7w7s.com</div>
<div class="wm" style="left:751.1999999999999px;top:2.5px">7w7s.com</div>
<div class="wm" style="left:751.1999999999999px;top:354px">7w7s.com</div>
<div class="wm" style="left:751.1999999999999px;top:704px">7w7s.com</div>
<div class="wm" style="left:1481.2px;top:2.5px">7w7s.com</div>
<div class="wm" style="left:1481.2px;top:354px">7w7s.com</div>
<div class="wm" style="left:1481.2px;top:704px">7w7s.com</div>
</div>
</div>
</body>
</html>
